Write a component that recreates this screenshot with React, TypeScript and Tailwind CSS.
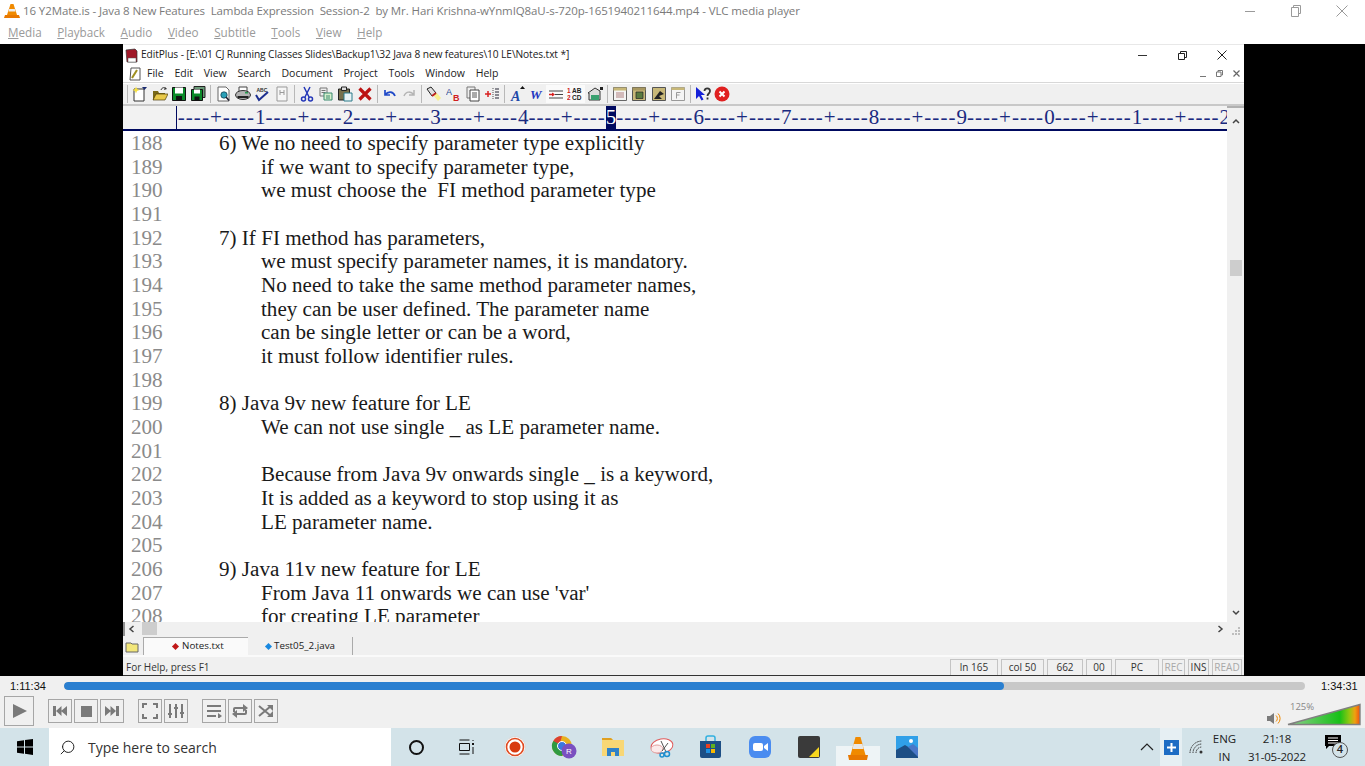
import React from "react";
import { Search } from "lucide-react";

const lines: [number, string, number][] = [
  [188, "6) We no need to specify parameter type explicitly", 0],
  [189, "if we want to specify parameter type,", 1],
  [190, "we must choose the\u00a0 FI method parameter type", 1],
  [191, "", 0],
  [192, "7) If FI method has parameters,", 0],
  [193, "we must specify parameter names, it is mandatory.", 1],
  [194, "No need to take the same method parameter names,", 1],
  [195, "they can be user defined. The parameter name", 1],
  [196, "can be single letter or can be a word,", 1],
  [197, "it must follow identifier rules.", 1],
  [198, "", 0],
  [199, "8) Java 9v new feature for LE", 0],
  [200, "We can not use single _ as LE parameter name.", 1],
  [201, "", 0],
  [202, "Because from Java 9v onwards single _ is a keyword,", 1],
  [203, "It is added as a keyword to stop using it as", 1],
  [204, "LE parameter name.", 1],
  [205, "", 0],
  [206, "9) Java 11v new feature for LE", 0],
  [207, "From Java 11 onwards we can use 'var'", 1],
  [208, "for creating LE parameter", 1],
];

const rulerDigits = ["1", "2", "3", "4", "5", "6", "7", "8", "9", "0", "1", "2"];

const S = ({ w = 16, h = 16, vb, children }: { w?: number; h?: number; vb?: string; children: React.ReactNode }) => (
  <svg width={w} height={h} viewBox={vb || `0 0 ${w} ${h}`} className="shrink-0">{children}</svg>
);

const Sep = () => <div className="w-px h-[18px] bg-[#b8b8b8] mx-[2.3px] shrink-0" />;

const toolIcons: Record<string, React.ReactNode> = {
  new: <><path d="M2 3h10v12H2z" fill="#fff" stroke="#333" /><path d="M4 .5l1 2.5 2.5 1L5 5 4 7.5 3 5 .5 4 3 3z" fill="#f5e040" /><path d="M10 1h5l-2.5 3z" fill="#1a2a70" /></>,
  open: <><path d="M1 14V5h5l1 2h6v7z" fill="#7a6a18" /><path d="M1 14l3-6h12l-3 6z" fill="#e8c94a" stroke="#4a3a08" strokeWidth=".7" /><path d="M9 4c1-3 4-3 5-1" fill="none" stroke="#333" /><path d="M13 1l2 2-3 1z" fill="#333" /></>,
  save: <><path d="M1.5 1.5h13v13h-13z" fill="#0a8a28" stroke="#111" /><path d="M4 1.5h8v6H4z" fill="#fff" /><path d="M5 10h6v4.5H5z" fill="#111" /></>,
  saveall: <><path d="M4 .5h11v11H4z" fill="#6a9a78" stroke="#222" /><path d="M1.5 3.5h11v11h-11z" fill="#0a8a28" stroke="#111" /><path d="M4 3.5h6v4H4z" fill="#fff" /><path d="M4.5 10.5h5v4h-5z" fill="#111" /></>,
  preview: <><path d="M3 1h8l3 3v11H3z" fill="#fff" stroke="#666" /><circle cx="9" cy="9" r="3.2" fill="#2aa0b8" stroke="#134" strokeWidth=".7" /><path d="M11 11l3 3.5" stroke="#223" strokeWidth="1.6" /></>,
  print: <><path d="M4 1h8v5H4z" fill="#fff" stroke="#444" /><ellipse cx="8" cy="9" rx="7.5" ry="4.5" fill="#b4b4b4" stroke="#333" /><path d="M2.5 10h11v2h-11z" fill="#222" /><path d="M10 6h3v1.5h-3z" fill="#2a9a50" /></>,
  spell: <><text x="2.500" y="6" fontSize="5" fontWeight="700" fontFamily="Liberation Sans" fill="#333">ABC</text><path d="M2 9l3 5 9-8" fill="none" stroke="#1d2f90" strokeWidth="2" /></>,
  hdr: <><path d="M3 1h10v14H3z" fill="#f6f6f6" stroke="#999" /><path d="M6 4v5M10 4v5M6 6.5h4" stroke="#999" /></>,
  cut: <><path d="M5 1l5 10M11 1L6 11" stroke="#2437b8" strokeWidth="1.5" /><circle cx="4.5" cy="13" r="2" fill="none" stroke="#2437b8" strokeWidth="1.5" /><circle cx="11.5" cy="13" r="2" fill="none" stroke="#2437b8" strokeWidth="1.5" /></>,
  copy: <><path d="M2 2h7v8H2z" fill="#eee" stroke="#777" /><path d="M3.5 4.5h4M3.5 6.5h4" stroke="#777" /><path d="M6 7h8v7H6z" fill="#d6f0cc" stroke="#3a8a70" /><path d="M8 10h4M8 12h4" stroke="#3a8a70" /></>,
  paste: <><path d="M1.5 3h11v11h-11z" fill="#77704c" stroke="#222" /><path d="M4.5 1h5v3.5h-5z" fill="#ddd" stroke="#222" /><path d="M7 7h8v8H7z" fill="#e9f3f6" stroke="#2a7a8a" /></>,
  del: <path d="M2.5 2.5l11 11M13.5 2.5l-11 11" stroke="#bc1414" strokeWidth="3.2" />,
  undo: <path d="M3 4v5h5M3 9c3-4 8-4 10 1" fill="none" stroke="#1f49c8" strokeWidth="1.7" />,
  redo: <path d="M13 4v5H8M13 9C10 5 5 5 3 10" fill="none" stroke="#b4b4b4" strokeWidth="1.5" />,
  find: <><path d="M1 3l4-2 5 6-4 3z" fill="#e0e0e0" stroke="#222" /><path d="M7 9l4-2 4 5-3 3z" fill="#f8f090" /><path d="M6 10l4-3" stroke="#c02020" strokeWidth="1.8" /></>,
  replace: <><text x="0" y="9" fontSize="9" fontFamily="Liberation Sans" fill="#1f3f90">A</text><text x="7" y="15" fontSize="9" fontWeight="700" fontFamily="Liberation Sans" fill="#d02020">B</text></>,
  pages: <><path d="M2 1h8v11H2z" fill="#eee" stroke="#777" /><path d="M5 4h9v11H5z" fill="#fff" stroke="#444" /><path d="M7 7h5M7 9h5M7 11h5" stroke="#555" /></>,
  goto: <><path d="M1 8h6M4 5v6" stroke="#d82020" strokeWidth="1.5" /><path d="M9 2v12" stroke="#555" strokeDasharray="1 1" /><path d="M11 3h4M11 6h4M11 9h4M11 12h4" stroke="#223" /></>,
  fontA: <><text x="2" y="14.500" fontSize="14" fontWeight="700" fontStyle="italic" fontFamily="Liberation Serif" fill="#1f49a8">A</text><path d="M11 3l2.5-3L16 3z" fill="#111" /></>,
  fontW: <text x="1" y="13" fontSize="13" fontWeight="700" fontStyle="italic" fontFamily="Liberation Serif" fill="#2436c0">W</text>,
  wrap: <><path d="M1 5h14M7 8.5h8M1 12h14" stroke="#444" /><path d="M1 8.5h5" stroke="#d82020" strokeWidth="1.5" /><path d="M4 6.5l3 2-3 2z" fill="#d82020" /></>,
  num: <><text x="0" y="7" fontSize="6.5" fontWeight="700" fontFamily="Liberation Sans" fill="#d02020">1</text><text x="5" y="7" fontSize="6.5" fontWeight="700" fontFamily="Liberation Sans" fill="#222">AB</text><text x="0" y="14" fontSize="6.5" fontWeight="700" fontFamily="Liberation Sans" fill="#d02020">2</text><text x="5" y="14" fontSize="6.5" fontWeight="700" fontFamily="Liberation Sans" fill="#222">CD</text></>,
  cfg: <><path d="M1 7l7-5 5 3v9H2V7z" fill="#ddd" stroke="#333" /><path d="M4 9h8v5H4z" fill="#3aa070" /><path d="M13 1h3v3h-3z" fill="#222" /></>,
  win1: <><path d="M1.5 1.5h13v13h-13z" fill="#f4f4f4" stroke="#666" /><path d="M1.5 1.5h13v3h-13z" fill="#c8b878" /><path d="M4 7h8M4 9h8M4 11h8" stroke="#b08080" /></>,
  win2: <><path d="M1.5 1.5h13v13h-13z" fill="#c8b878" stroke="#555" /><path d="M1.5 1.5h13v3h-13z" fill="#a89860" /><path d="M5 6h7v6.5H5z" fill="#5a7a40" stroke="#222" strokeWidth=".7" /></>,
  tool: <><path d="M1.5 1.5h13v13h-13z" fill="#c8b878" stroke="#555" /><path d="M3 13l6-8 4 3-5 2 3 3z" fill="#222" /></>,
  fbox: <><path d="M1.5 1.5h13v13h-13z" fill="#f4f4f4" stroke="#999" /><path d="M1.5 1.5h13v2.5h-13z" fill="#c8b878" /><path d="M6.5 6.5h4M6.5 6.5v6M6.5 9h3" stroke="#999" /></>,
  help: <><path d="M1 1v12l3-3 2.500 4.500 2-1L6 9h4z" fill="#1420d8" /><path d="M9.500 5c0-3.500 5.500-3.500 5.500 0 0 2.500-2.500 2.500-2.500 5M12.500 11.500v2" fill="none" stroke="#333" strokeWidth="1.800" /></>,
  stop: <><circle cx="8" cy="8" r="7.5" fill="#e02020" /><path d="M5.500 5.500l5 5M10.500 5.500l-5 5" stroke="#fff" strokeWidth="2" /></>,
};

const groups = [
  ["new", "open", "save", "saveall"],
  ["preview", "print", "spell", "hdr"],
  ["cut", "copy", "paste", "del"],
  ["undo", "redo"],
  ["find", "replace", "pages", "goto"],
  ["fontA", "fontW", "wrap", "num", "cfg"],
  ["win1", "win2", "tool", "fbox"],
  ["help", "stop"],
];

const Ctl = ({ children, big }: { children: React.ReactNode; big?: boolean }) => (
  <div className={`border border-[#a6a6a6] flex items-center justify-center bg-[#f0f0f0] ${big ? "w-[30px] h-[30px]" : "w-[24px] h-[24px]"}`}>{children}</div>
);

const StatusCell = ({ w, t, dim }: { w: number; t: string; dim?: boolean }) => (
  <div style={{ width: w }} className={`h-[16px] border-t border-x border-[#c4c4c4] flex items-center justify-center text-[10px] ${dim ? "text-[#a8a8a8]" : "text-[#333]"}`}>{t}</div>
);

const menus = ["Media", "Playback", "Audio", "Video", "Subtitle", "Tools", "View", "Help"];
const epMenus = ["File", "Edit", "View", "Search", "Document", "Project", "Tools", "Window", "Help"];
const Cell = ({ children }: { children: React.ReactNode }) => <div className="w-[49px] flex justify-center">{children}</div>;

export default function App() {
  return (
    <div className="w-[1365px] h-[766px] overflow-hidden flex flex-col bg-black font-['Open_Sans','Noto_Sans',sans-serif]">
      {/* VLC title */}
      <div className="h-[22px] bg-white flex items-center pl-[4px] shrink-0">
        <S w={16} h={16}>
          <path d="M6.500 1h3l3.500 11H3z" fill="#f08a00" />
          <path d="M5.200 6h5.600l.7 2.400H4.500z" fill="#eee" />
          <path d="M1 12h14l1 3H0z" fill="#e87800" />
        </S>
        <span className="ml-[3px] text-[11.5px] text-[#7a7a7a] whitespace-pre tracking-[-0.1px]">16 Y2Mate.is - Java 8 New Features  Lambda Expression  Session-2  by Mr. Hari Krishna-wYnmIQ8aU-s-720p-1651940211644.mp4 - VLC media player</span>
        <div className="ml-auto flex items-center">
          <div className="w-[46px] flex justify-center"><div className="w-[10px] h-px bg-[#9a9a9a]" /></div>
          <div className="w-[46px] flex justify-center"><S w={10} h={12}><path d="M.5 2.500h7v9h-7zM2.500 2.500v-2h7v8h-2" fill="none" stroke="#9a9a9a" /></S></div>
          <div className="w-[46px] flex justify-center"><S w={12} h={12}><path d="M.5.5l11 11M11.500.5l-11 11" stroke="#9a9a9a" /></S></div>
        </div>
      </div>
      {/* VLC menu */}
      <div className="h-[22px] bg-white flex items-center pl-[8px] gap-[15.6px] text-[11.7px] text-[#9a9a9a] shrink-0">
        {menus.map((m) => <span key={m}><u className="decoration-[#9a9a9a]">{m[0]}</u>{m.slice(1)}</span>)}
      </div>
      {/* Video area */}
      <div className="h-[632px] shrink-0 bg-black flex justify-center pl-[2px]">
        <div className="w-[1121px] h-full bg-[#f0f0f0] flex flex-col border-t border-[#e8e8e8]">
          {/* EditPlus title */}
          <div className="h-[20px] bg-white flex items-center pl-[1px] shrink-0">
            <S w={15} h={15}>
              <path d="M2 2l9-1 2 2v11H3z" fill="#a01828" stroke="#333" strokeWidth=".7" />
              <path d="M4 10h8v4H4z" fill="#fff" stroke="#555" strokeWidth=".5" />
            </S>
            <span className="ml-[2px] text-[10.2px] text-[#222] tracking-[-0.1px] whitespace-pre">EditPlus - [E:\01 CJ Running Classes Slides\Backup1\32 Java 8 new features\10 LE\Notes.txt *]</span>
            <div className="ml-auto flex items-center pr-[2px]">
              <div className="w-[40px] flex justify-center"><div className="w-[9px] h-px bg-[#333]" /></div>
              <div className="w-[40px] flex justify-center"><S w={9} h={9}><path d="M.5 2.500h6v6h-6zM2.500 2.500v-2h6v6h-2" fill="none" stroke="#222" /></S></div>
              <div className="w-[40px] flex justify-center"><S w={10} h={10}><path d="M.5.5l9 9M9.500.5l-9 9" stroke="#222" /></S></div>
            </div>
          </div>
          {/* EditPlus menu */}
          <div className="h-[18px] bg-white flex items-center pl-[5px] shrink-0 border-b border-[#d8d8d8]">
            <S w={14} h={14}><path d="M3 1h9v12H2z" fill="#fff" stroke="#555" /><path d="M9 3l-5 8" stroke="#a09020" strokeWidth="2" /></S>
            <div className="ml-[5px] flex gap-[10.75px] text-[10.5px] text-[#222]">
              {epMenus.map((m) => <span key={m}>{m}</span>)}
            </div>
            <div className="ml-auto flex items-center gap-[10px] pr-[4px] text-[#777]">
              <div className="w-[6px] h-px bg-[#777] mt-[5px]" />
              <S w={7} h={7}><path d="M.5 2h4.500v4.500H.5zM2 2V.5h4.500V5H5" fill="none" stroke="#777" /></S>
              <S w={7} h={7}><path d="M.5.5l6 6M6.500.5l-6 6" stroke="#666" strokeWidth="1.2" /></S>
            </div>
          </div>
          {/* Toolbar */}
          <div className="h-[23px] bg-[#f0f0f0] flex items-center pl-[2px] shrink-0 border-t border-[#fff] border-b-2 border-b-[#c8c8c8]">
            <Sep />
            {groups.map((g, i) => (
              <React.Fragment key={i}>
                {g.map((k) => (
                  <div key={k} className={`w-[19.4px] h-[18px] shrink-0 flex items-center justify-center ${k === "wrap" || k === "num" ? "bg-[#fafafa]" : ""}`}>
                    <S w={16} h={16}>{toolIcons[k]}</S>
                  </div>
                ))}
                {i < groups.length - 1 && <Sep />}
              </React.Fragment>
            ))}
          </div>
          {/* Body */}
          <div className="flex-1 min-h-0 flex flex-col">
            <div className="h-[530px] flex flex-col shrink-0">
              <div className="flex-1 min-h-0 flex">
                <div className="w-[1104px] flex flex-col">
                  {/* Ruler */}
                  <div className="h-[25px] flex shrink-0 border-b-2 border-[#000a60] bg-[#f2f2f2] overflow-hidden font-['Liberation_Serif',serif] text-[#1a2a80]">
                    <div className="w-[54px] shrink-0 border-r border-[#000a60]" />
                    <div className="flex items-stretch overflow-hidden flex-1 pl-[0.8px] text-[21px]">
                      {rulerDigits.map((d, i) => (
                        <React.Fragment key={i}>
                          <span className="w-[77.2px] shrink-0 leading-[23px] whitespace-pre tracking-[1.04px]">----+----</span>
                          <span className={`w-[10.5px] shrink-0 text-center leading-[23px] ${i === 4 ? "bg-[#000a60] text-white" : ""}`}>{d}</span>
                        </React.Fragment>
                      ))}
                    </div>
                  </div>
                  {/* Text */}
                  <div className="flex-1 min-h-0 bg-white overflow-hidden font-['Liberation_Serif',serif] text-[21.1px] pt-px">
                    {lines.map(([n, t, ind]) => (
                      <div key={n} className="h-[23.68px] leading-[23.68px] flex whitespace-pre">
                        <span className="w-[96px] pl-[8px] shrink-0 text-[#8a8a8a]">{n}</span>
                        <span className={`text-[#1a1a1a] ${ind ? "pl-[42px]" : ""}`}>{t}</span>
                      </div>
                    ))}
                  </div>
                </div>
                {/* vscroll */}
                <div className="flex-1 flex flex-col items-center bg-[#f0f0f0] border-t-2 border-[#b0b0b0]">
                  <div className="h-[17px] flex items-end"><S w={10} h={8}><path d="M2 6l3-3 3 3" fill="none" stroke="#444" strokeWidth="1.500" /></S></div>
                  <div className="h-[135px]" />
                  <div className="w-[12px] h-[16px] bg-[#cdcdcd]" />
                  <div className="flex-1" />
                  <div className="h-[13px] flex items-start"><S w={10} h={8}><path d="M2 2l3 3 3-3" fill="none" stroke="#444" strokeWidth="1.500" /></S></div>
                </div>
              </div>
              {/* hscroll */}
              <div className="h-[14px] flex items-center shrink-0 bg-[#f0f0f0]">
                <div className="w-[2px] h-full bg-[#909090] mr-[2px]" />
                <S w={10} h={10}><path d="M6.500 2L3 5l3.500 3" fill="none" stroke="#444" strokeWidth="1.500" /></S>
                <div className="w-[15px] h-[13px] self-start bg-[#cdcdcd] ml-[5px]" />
                <div className="ml-auto mr-[7px]"><S w={10} h={10}><path d="M3.500 2L7 5 3.500 8" fill="none" stroke="#444" strokeWidth="1.500" /></S></div>
                <div className="mr-[3px] mt-[2px]"><S w={9} h={9}><path d="M6 1h2v2H6zM3 4h2v2H3zM6 4h2v2H6zM0 7h2v2H0zM3 7h2v2H3zM6 7h2v2H6z" fill="#bdbdbd" /></S></div>
              </div>
            </div>
            {/* tabs */}
            <div className="h-[21px] flex items-end pl-[2px] shrink-0 text-[9.8px] text-[#222] border-b-2 border-[#fafafa]">
              <div className="w-[18px] h-[17px] flex items-center"><S w={14} h={12}><path d="M1 2h5l1 1h6v8H1z" fill="#f2e67a" stroke="#666" /></S></div>
              <div className="w-[105px] h-[18px] bg-[#fafafa] border-t border-l border-[#aaa] flex items-center pl-[29px] gap-[4px]">
                <span className="w-[5px] h-[5px] rotate-45 bg-[#c01818]" /> Notes.txt
              </div>
              <div className="w-[105px] h-[18px] border-r border-[#aaa] border-t-0 flex items-center pl-[18px] gap-[3px]">
                <span className="w-[5px] h-[5px] rotate-45 bg-[#1888e0]" /> Test05_2.java
              </div>
            </div>
            {/* status */}
            <div className="flex-1 flex items-end pl-[3px] pr-[2px] text-[10px] text-[#333] border-b border-[#333]">
              <div className="h-[16px] flex items-center">For Help, press F1</div>
              <div className="ml-auto flex gap-[3px]">
                <StatusCell w={48} t="ln 165" />
                <StatusCell w={43} t="col 50" />
                <StatusCell w={36} t="662" />
                <StatusCell w={26} t="00" />
                <StatusCell w={44} t="PC" />
                <StatusCell w={23} t="REC" dim />
                <StatusCell w={21} t="INS" />
                <StatusCell w={30} t="READ" dim />
              </div>
            </div>
          </div>
        </div>
      </div>
      {/* VLC controls */}
      <div className="h-[52px] bg-[#f0f0f0] shrink-0 flex flex-col">
        <div className="h-[20px] flex items-center text-[11px] text-[#111] font-['Liberation_Sans',sans-serif]">
          <div className="w-[64px] pl-[10px] shrink-0">1:11:34</div>
          <div className="w-[1241px] h-[8px] rounded-[4px] bg-[#c8c8c8] overflow-hidden shrink-0">
            <div className="w-[940px] h-full bg-[#2a7fd0] rounded-[4px]" />
          </div>
          <div className="pl-[16px]">1:34:31</div>
        </div>
        <div className="flex items-center pl-[4px] h-[30px]">
          <Ctl big><S w={18} h={18}><path d="M3 2l14 7-14 7z" fill="#7a7a7a" /></S></Ctl>
          <div className="w-[14px]" />
          <div className="flex gap-[2px]">
            <Ctl><S w={14} h={10}><path d="M0 0h3v10H0zM3 5l5.500-5v10zM8 5l6-5v10z" fill="#7a7a7a" /></S></Ctl>
            <Ctl><div className="w-[11px] h-[11px] bg-[#7a7a7a]" /></Ctl>
            <Ctl><S w={14} h={10}><path d="M14 0h-3v10h3zM11 5L5.500 0v10zM6 5L0 0v10z" fill="#7a7a7a" /></S></Ctl>
          </div>
          <div className="w-[14px]" />
          <div className="flex gap-[2px]">
            <Ctl><S w={16} h={16}><path d="M1 5V1h4M11 1h4v4M15 11v4h-4M5 15H1v-4" fill="none" stroke="#7a7a7a" strokeWidth="2" /></S></Ctl>
            <Ctl><S w={16} h={16}><path d="M2 1v14M8 1v14M14 1v14" stroke="#7a7a7a" strokeWidth="2" /><path d="M0 10h4v2H0zM6 4h4v2H6zM12 9h4v2h-4z" fill="#7a7a7a" /></S></Ctl>
          </div>
          <div className="w-[14px]" />
          <div className="flex gap-[2px]">
            <Ctl><S w={16} h={14}><path d="M1 2h14M1 7h14M1 12h9" stroke="#7a7a7a" strokeWidth="2" /><path d="M12 9l4 3-4 3z" fill="#7a7a7a" /></S></Ctl>
            <Ctl><S w={16} h={14}><path d="M2 8V5a1 1 0 0 1 1-1h9M14 6v3a1 1 0 0 1-1 1H4" fill="none" stroke="#7a7a7a" strokeWidth="2" /><path d="M11 0l5 4-5 4zM5 6l-5 4 5 4z" fill="#7a7a7a" /></S></Ctl>
            <Ctl><S w={16} h={14}><path d="M1 2l12 10M1 12L13 2" stroke="#7a7a7a" strokeWidth="2" /><path d="M9 1h6v6zM9 13h6V7z" fill="#7a7a7a" /></S></Ctl>
          </div>
          <div className="ml-auto flex items-end pr-[4px] h-[30px]">
            <div className="mb-[1px] mr-[6px]"><S w={14} h={13}><path d="M0 4h3l4-3v11L3 9H0z" fill="#7a7a7a" /><path d="M9 3.500a4 4 0 0 1 0 6M11 1.500a7 7 0 0 1 0 10" fill="none" stroke="#f08a00" /></S></div>
            <div className="flex flex-col items-start">
              <span className="text-[9.5px] leading-[9px] text-[#888] ml-[3px] -mb-[8px]">125%</span>
              <S w={74} h={23}>
                <defs>
                  <linearGradient id="vol" x1="0" x2="1" y1="0" y2="0">
                    <stop offset="0" stopColor="#8fd08f" />
                    <stop offset="0.72" stopColor="#18c018" />
                    <stop offset="0.85" stopColor="#90c810" />
                    <stop offset="0.93" stopColor="#f0a010" />
                    <stop offset="1" stopColor="#f05010" />
                  </linearGradient>
                </defs>
                <path d="M1 21.500L73 1.500v20z" fill="url(#vol)" stroke="#808080" strokeWidth="1.400" />
              </S>
            </div>
          </div>
        </div>
      </div>
      {/* Taskbar */}
      <div className="h-[38px] bg-[#d3e3e9] flex items-center shrink-0 font-['Open_Sans',sans-serif]">
        <div className="w-[49px] flex justify-center">
          <S w={16} h={16}><path d="M0 2.200l7-1V7.500H0zM8 1l8-1v7.500H8zM0 8.500h7v6.300l-7-1zM8 8.500h8V16l-8-1.200z" fill="#000" /></S>
        </div>
        <div className="w-[342px] h-full bg-white flex items-center pl-[10px]">
          <Search size={17} strokeWidth={1.4} className="text-[#222] -scale-x-100" />
          <span className="ml-[12px] text-[14px] text-[#333]">Type here to search</span>
        </div>
        <div className="flex items-center h-full ml-[1px]">
          <div className="w-[49px] flex justify-center"><div className="w-[15px] h-[15px] rounded-full border-[2.500px] border-[#111]" /></div>
          <Cell>
            <S w={18} h={16}><path d="M2.500 1h10M2.500 15h10M2.500 4.500h10v7h-10z" fill="none" stroke="#111" /><path d="M15 4h2v2h-2z" fill="#111" /><path d="M16 8v7M16 1v1" stroke="#111" /></S>
          </Cell>
          <Cell>
            <S w={22} h={22}><circle cx="11" cy="11" r="10.500" fill="#fff" stroke="#d8d8d8" /><circle cx="11" cy="11" r="8.500" fill="none" stroke="#e04a20" strokeWidth="1.600" /><circle cx="11" cy="11" r="5.500" fill="#d83a10" /></S>
          </Cell>
          <Cell>
            <S w={26} h={24}>
              <circle cx="11" cy="11" r="10" fill="#e8b020" />
              <path d="M11 1a10 10 0 0 0-8.700 5l5 8z" fill="#dc4030" />
              <path d="M2.300 6A10 10 0 0 0 11 21l5-8z" fill="#2f9a40" />
              <circle cx="11" cy="11" r="4.500" fill="#3a78e0" stroke="#fff" />
              <circle cx="18" cy="16" r="7.500" fill="#7a50c0" />
              <text x="18" y="19" textAnchor="middle" fontSize="8" fontFamily="Liberation Sans" fill="#fff">R</text>
            </S>
          </Cell>
          <Cell>
            <S w={22} h={20}><path d="M0 1h9l2 2h11v16H0z" fill="#f8d775" /><path d="M0 1h9l2 2H0z" fill="#e0a020" /><path d="M5 11h12v8H5z" fill="#2f82c8" /><path d="M9 15h4v4H9z" fill="#f8d775" /></S>
          </Cell>
          <Cell>
            <S w={24} h={22}><ellipse cx="12" cy="10" rx="11" ry="7" fill="#fff" stroke="#e05a5a" transform="rotate(-10 12 10)" /><ellipse cx="7" cy="13" rx="6" ry="4" fill="#fbeaea" stroke="#e0a0a0" /><path d="M11 5l5 11M18 7l-6 8" stroke="#555" /><circle cx="17" cy="18" r="2.500" fill="none" stroke="#2090d0" strokeWidth="1.500" /><circle cx="12" cy="19" r="2" fill="none" stroke="#2090d0" strokeWidth="1.500" /></S>
          </Cell>
          <Cell>
            <S w={23} h={24}><path d="M1 6h21v15a2 2 0 0 1-2 2H3a2 2 0 0 1-2-2z" fill="#1d4f85" /><path d="M7 6V3a2 2 0 0 1 2-2h5a2 2 0 0 1 2 2v3" fill="none" stroke="#30b0e0" strokeWidth="1.500" /><path d="M7 9h4v4H7z" fill="#e84020" /><path d="M12 9h4v4h-4z" fill="#60b020" /><path d="M7 14h4v4H7z" fill="#2090e0" /><path d="M12 14h4v4h-4z" fill="#f8b800" /></S>
          </Cell>
          <Cell>
            <S w={22} h={22}><rect width="22" height="22" rx="6" fill="#4a8cf0" /><rect x="4" y="7" width="10" height="8" rx="2" fill="#fff" /><path d="M15 10l4-3v8l-4-3z" fill="#fff" /></S>
          </Cell>
          <Cell>
            <S w={22} h={22}><rect width="22" height="22" rx="2" fill="#3a3a3a" /><path d="M11 21l10-10v10z" fill="#f8d820" /></S>
          </Cell>
          <div className="w-[49px] h-full flex justify-center items-end">
            <div className="w-[44px] h-[20px] bg-[#eef4f6] flex justify-center relative">
              <div className="absolute bottom-[5px]"><S w={20} h={24}><path d="M7.500 0h5l5 18H2.500z" fill="#f08a00" /><path d="M5.500 7h9l1 5h-11z" fill="#e8e8e8" /><path d="M0 18h20l-1 5H1z" fill="#e87800" /></S></div>
            </div>
          </div>
          <Cell>
            <S w={22} h={22}><rect width="22" height="22" fill="#30a0e8" /><path d="M0 22V14l9-5 13 8v5z" fill="#1d4f85" /><path d="M12 11l5-3 5 4v9z" fill="#4a78c8" /><circle cx="15" cy="5" r="2" fill="#fff" /></S>
          </Cell>
        </div>
        <div className="ml-auto flex items-center h-full text-[12px] text-[#222] mr-[17px]">
          <S w={14} h={8}><path d="M1 7l6-6 6 6" fill="none" stroke="#222" strokeWidth="1.200" /></S>
          <div className="ml-[6px] w-[22px] h-full bg-[#e6eff3] flex items-center justify-center">
            <div className="w-[15px] h-[15px] bg-[#1d6cc4] flex items-center justify-center"><S w={11} h={11}><path d="M5.500 1v9M1 5.500h9" stroke="#fff" strokeWidth="2" /></S></div>
          </div>
          <div className="ml-[7px]"><S w={14} h={14}><path d="M1 13a12 12 0 0 1 12-12M4 13a9 9 0 0 1 9-9M7 13a6 6 0 0 1 6-6" fill="none" stroke="#333" strokeDasharray="1.500 .8" /><circle cx="12" cy="12" r="1.500" fill="#333" /></S></div>
          <div className="ml-[9.5px] w-[24px] pt-[2px] flex flex-col items-center leading-[18px] text-[11.5px]"><span>ENG</span><span>IN</span></div>
          <div className="ml-[10.5px] w-[60px] pt-[2px] flex flex-col items-center leading-[18px] text-[11.5px] tracking-[-0.2px]"><span>21:18</span><span className="whitespace-nowrap">31-05-2022</span></div>
          <div className="ml-[18px] relative w-[23px] h-[25px]">
            <div className="absolute left-0 top-0"><S w={16} h={15}><path d="M0 0h16v11H4l-3 3V11H0z" fill="#000" /><path d="M3 3h10M3 5.500h10M3 8h10" stroke="#fff" /></S></div>
            <div className="absolute right-0 bottom-[2px] w-[16px] h-[16px] rounded-full bg-[#d3e3e9] border border-[#555] flex items-center justify-center text-[11px] font-semibold">4</div>
          </div>
        </div>
      </div>
    </div>
  );
}
